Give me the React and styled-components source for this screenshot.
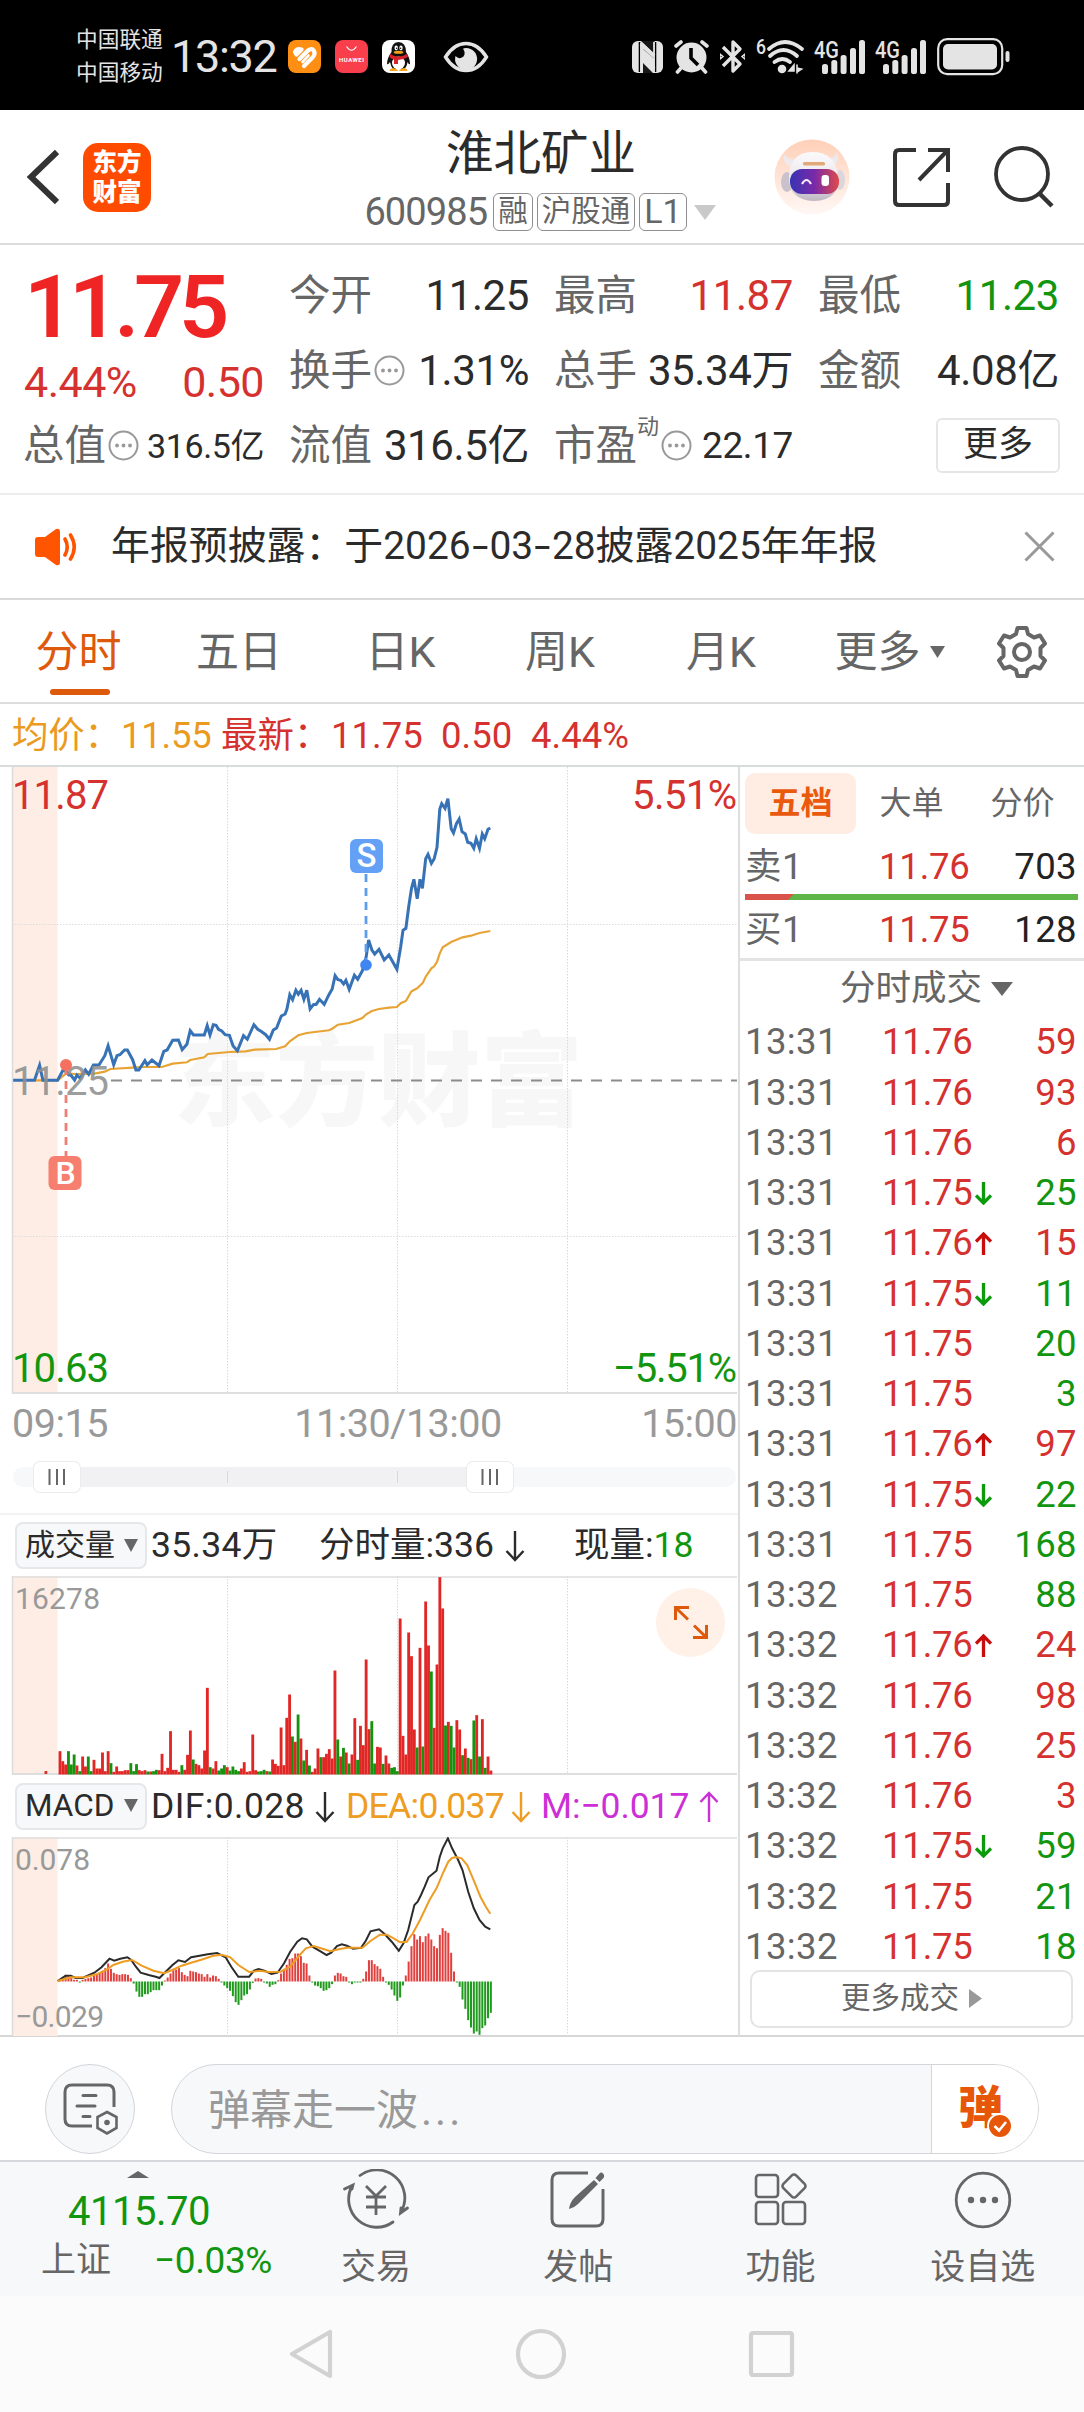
import React from 'react'
import styled, { createGlobalStyle, css } from 'styled-components'

const RED = '#d5312f'
const GREEN = '#12950f'
const ORANGE = '#dd5a0d'
const GREY = '#666'
const FONT = `Roboto, 'Noto Sans CJK SC', sans-serif`

const GlobalStyle = createGlobalStyle`
  * { box-sizing: border-box; }
  body { margin: 0; background: #fff; }
`

const Screen = styled.div`
  width: 1084px;
  height: 2412px;
  overflow: hidden;
  background: #fff;
  color: #2b2b2b;
  font-family: ${FONT};
  line-height: 1;
  white-space: nowrap;
`

/* ---------- status bar ---------- */

const StatusBar = styled.header`
  display: flex;
  align-items: center;
  height: 110px;
  padding: 3px 74px 0 76px;
  background: #000;
  color: #e4e4e4;
`

const Carriers = styled.div`
  width: 95px;
  padding-bottom: 1px;
  font-size: 21.7px;
  line-height: 33px;
`

const Clock = styled.div`
  width: 117px;
  font-size: 45px;
  letter-spacing: -1.3px;
`

const AppIcons = styled.div`
  display: flex;
  gap: 14px;
  margin-right: 28px;
`

const StatusIcons = styled.div`
  display: flex;
  align-items: center;
  gap: 11px;
  margin-left: auto;
`

/* ---------- title bar ---------- */

const TitleBar = styled.div`
  display: grid;
  grid-template-columns: 1fr auto 1fr;
  height: 135px;
  padding: 1px 30px 0 26px;
  border-bottom: 2px solid #dcdcdc;
`

const TitleLeft = styled.div`
  display: flex;
  align-items: center;
  gap: 24px;
`

const BrandLogo = styled.div`
  width: 68px;
  height: 69px;
  padding-top: 5px;
  border-radius: 15px;
  background: #ff4b00;
  color: #fff;
  font-size: 24.5px;
  font-weight: 800;
  line-height: 30px;
  text-align: center;
`

const TitleCenter = styled.div`
  display: flex;
  flex-direction: column;
  align-items: center;
  padding-top: 15px;
`

const StockName = styled.h1`
  margin: 0;
  padding-left: 2px;
  font-size: 47.5px;
  font-weight: 400;
  line-height: 57px;
`

const StockMeta = styled.div`
  display: flex;
  align-items: center;
  gap: 4px;
  height: 58px;
  color: ${GREY};
`

const StockCode = styled.span`
  margin-right: 2px;
  font-size: 38px;
  letter-spacing: -0.9px;
`

const Tag = styled.span`
  height: 38px;
  padding: 0 4px;
  border: 1.5px solid #8e8e8e;
  border-radius: 6px;
  font-size: 29.5px;
  line-height: 34px;
  ${p => p.$latin && css`
    margin-right: 3px;
    font-size: 34px;
  `}
`

const TitleRight = styled.div`
  display: flex;
  align-items: center;
  justify-content: flex-end;
  gap: 43px;
`

/* ---------- quote ---------- */

const Quote = styled.section`
  display: grid;
  grid-template-columns: 240px 239px 238px 240px;
  grid-template-rows: 75px 75px 75px;
  column-gap: 26px;
  height: 250px;
  padding: 13px 0 0 24px;
  border-bottom: 2px solid #ececec;
`

const LastPrice = styled.div`
  grid-row: span 2;
  color: ${RED};
`

const BigPrice = styled.div`
  height: 98px;
  color: #ee2524;
  font-size: 88px;
  font-weight: 600;
  line-height: 98px;
  letter-spacing: -5.2px;
`

const Change = styled.div`
  display: flex;
  justify-content: space-between;
  font-size: 43px;
  line-height: 52px;
  letter-spacing: -0.5px;
`

const Cell = styled.div`
  display: flex;
  align-items: center;
  justify-content: space-between;
`

const Label = styled.span`
  display: flex;
  align-items: center;
  gap: 2px;
  margin-left: -1px;
  color: ${GREY};
  font-size: 41.5px;
`

const LabelSup = styled.sup`
  align-self: flex-start;
  margin: -9px 0 0 -2px;
  font-size: 22px;
  line-height: 1;
`

const Value = styled.span`
  color: ${p => p.$color || '#2b2b2b'};
  font-size: ${p => p.$size || 42}px;
  letter-spacing: -0.4px;
`

const MoreButton = styled.button`
  width: 124px;
  height: 55px;
  margin: 0 -1px 1px auto;
  padding: 0 0 1px;
  border: 2px solid #e6e6e6;
  border-radius: 6px;
  background: #fff;
  color: #2b2b2b;
  font: 35px/1 ${FONT};
`

/* ---------- notice ---------- */

const Notice = styled.section`
  display: flex;
  align-items: center;
  height: 105px;
  padding: 0 29px 0 34px;
  border-bottom: 2px solid #d9d9d9;
`

const NoticeText = styled.p`
  flex: 1;
  margin: 0 0 0 31px;
  font-size: 38.9px;
`

const Dash = styled.span`
  display: inline-block;
  padding: 0 4px;
  transform: scaleX(1.5);
`

/* ---------- period tabs ---------- */

const Tabs = styled.nav`
  display: grid;
  grid-template-columns: 157px 164px 159px 160px 162px 175px 89px;
  height: 104px;
  border-bottom: 2px solid #dcdcdc;
  color: ${GREY};
  font-size: 43px;
`

const Tab = styled.div`
  position: relative;
  display: flex;
  align-items: center;
  justify-content: center;
  gap: 9px;
  height: 104px;
  ${p => p.$active && css`
    color: ${ORANGE};
    &::after {
      content: '';
      position: absolute;
      left: 50px;
      bottom: 9px;
      width: 60px;
      height: 6px;
      border-radius: 3px;
      background: ${ORANGE};
    }
  `}
`

const AverageLine = styled.div`
  display: flex;
  align-items: center;
  height: 63px;
  padding: 3px 0 0 12px;
  border-bottom: 2px solid #d9dcdc;
  color: ${RED};
  font-size: 36.5px;
`

const Average = styled.span`
  width: 209px;
  color: #ea9a1e;
  letter-spacing: -0.2px;
`

const Latest = styled.span`
  width: ${p => p.$width}px;
`

/* ---------- body: charts + order book ---------- */

const Body = styled.main`
  display: grid;
  grid-template-columns: 740px 344px;
  height: 1270px;
  border-bottom: 2px solid #d6d6d6;
`

const Charts = styled.div`
  border-right: 2px solid #dedede;
`

const ChartSvg = styled.svg`
  display: block;
  font-family: ${FONT};
`

const RangeBar = styled.div`
  display: flex;
  align-items: center;
  height: 68px;
  padding: 0 0 6px 13px;
  border-bottom: 2px solid #f3f3f3;
`

const TimeAxis = styled.div`
  display: grid;
  grid-template-columns: 1fr auto 1fr;
  align-items: center;
  height: 46px;
  margin-top: 7px;
  padding: 0 1px 0 12px;
  color: #999;
  font-size: 39.5px;
  letter-spacing: -0.5px;
  > :last-child { text-align: right; }
`

const AxisMid = styled.span`
  padding-left: 47px;
`

const IndicatorBar = styled.div`
  display: flex;
  align-items: center;
  height: ${p => p.$height}px;
  padding-left: 15px;
`

const IndicatorPicker = styled.div`
  display: flex;
  align-items: center;
  justify-content: space-between;
  width: 132px;
  height: 47px;
  margin-right: 4px;
  padding: 0 7px 1px 8px;
  border: 2px solid #e6e7ea;
  border-radius: 8px;
  background: #f7f8fa;
  font-size: ${p => p.$size || 30}px;
`

const Metrics = styled.div`
  display: grid;
  grid-template-columns: ${p => p.$cols};
  padding-top: 1px;
  font-size: 35.5px;
`

const Metric = styled.span`
  display: flex;
  align-items: center;
  color: ${p => p.$color || '#2b2b2b'};
  letter-spacing: ${p => p.$spacing || 0}px;
  > svg { margin-left: ${p => p.$gap || 9}px; }
`

const Green = styled.span`
  color: ${GREEN};
`

const Book = styled.aside`
  display: flex;
  flex-direction: column;
  color: ${GREY};
`

const BookTabs = styled.div`
  display: grid;
  grid-template-columns: repeat(3, 111px);
  height: 67px;
  padding: 6px 0 0 5px;
`

const BookTab = styled.div`
  border-radius: 10px;
  font-size: 32px;
  line-height: 61px;
  text-align: center;
  ${p => p.$active && css`
    background: #ffede4;
    color: #ea5a0e;
    font-weight: 700;
  `}
`

const Row = styled.div`
  display: grid;
  grid-template-columns: ${p => (p.$book ? 134 : 137)}px 93px 1fr auto;
  align-items: center;
  height: ${p => p.$height || 50.25}px;
  padding: ${p => p.$top || 3}px 8px 0 5px;
  font-size: 36.5px;
  letter-spacing: 0.4px;
`

const Price = styled.span`
  color: ${RED};
  letter-spacing: -0.2px;
`

const Volume = styled.span`
  margin-right: -1px;
  color: ${p => p.$color || '#222'};
`

const BidAskBar = styled.div`
  height: 6px;
  margin: 0 6px 0 5px;
  background: linear-gradient(135deg, #d9534a 34px, #5fb548 35px);
`

const TradesTitle = styled.div`
  display: flex;
  align-items: center;
  justify-content: center;
  gap: 9px;
  height: 58px;
  padding: 1px 0 0 29px;
  border-top: 3px solid #e3e3e3;
  font-size: 35.5px;
`

const MoreTrades = styled.button`
  display: flex;
  align-items: center;
  justify-content: center;
  gap: 10px;
  width: 323px;
  height: 58px;
  margin: -1px 0 0 10px;
  padding: 0;
  border: 2px solid #e4e4e4;
  border-radius: 10px;
  background: #fff;
  color: ${GREY};
  font: 29.5px/1 ${FONT};
`

/* ---------- bottom ---------- */

const Barrage = styled.div`
  display: flex;
  align-items: flex-start;
  height: 125px;
  padding: 27px 45px 0;
  border-bottom: 2px solid #d5d8dc;
`

const RoundButton = styled.div`
  display: flex;
  align-items: center;
  justify-content: center;
  width: 90px;
  height: 90px;
  margin-right: 36px;
  padding: 2px 0 0 2px;
  border: 1.5px solid #d3d5d9;
  border-radius: 50%;
  background: #f7f8fa;
`

const Field = styled.div`
  display: flex;
  flex: 1;
  height: 90px;
  overflow: hidden;
  border: 1.5px solid #d3d5d9;
  border-radius: 45px;
  background: #f7f8fa;
`

const Placeholder = styled.div`
  flex: 1;
  padding-left: 36px;
  color: #999;
  font-size: 42px;
  line-height: 91px;
`

const Dots = styled.span`
  margin-left: 3px;
  letter-spacing: 3px;
`

const BarrageToggle = styled.div`
  position: relative;
  width: 107px;
  padding-left: 26px;
  border-left: 1.5px solid #d3d5d9;
  background: #fff;
  color: #e6570a;
  font-size: 45px;
  font-weight: 900;
  line-height: 88px;
`

const ToggleBadge = styled.svg`
  position: absolute;
  left: 55px;
  top: 48px;
`

const BottomBar = styled.nav`
  display: grid;
  grid-template-columns: 275px repeat(4, 202.25px);
  height: 134px;
  background: #f7f8fa;
  color: ${GREY};
`

const IndexBox = styled.div`
  padding-top: 9px;
  > svg { display: block; margin-left: 127px; }
`

const IndexPrice = styled.div`
  margin-top: 14px;
  padding-left: 68px;
  color: ${GREEN};
  font-size: 40px;
  letter-spacing: -0.5px;
`

const IndexChange = styled.div`
  display: flex;
  align-items: center;
  justify-content: space-between;
  margin-top: 10px;
  padding: 0 3px 0 41px;
  font-size: 35px;
`

const IndexPercent = styled(Green)`
  font-size: 37px;
  letter-spacing: -0.4px;
`

const BottomItem = styled.div`
  display: flex;
  flex-direction: column;
  align-items: center;
  padding-top: 7px;
  font-size: 35px;
  > svg { margin-bottom: 21px; }
`

const SystemNav = styled.footer`
  display: flex;
  align-items: center;
  justify-content: space-between;
  height: 116px;
  padding: 0 288px;
  background: #fbfbfb;
`

/* ---------- data ---------- */

const priceLine =
  '28,961 73,961 84,916 91,961 122,961 134,929 140,935 146,945 150,945 158,960 163,945 170,955 181,930 188,943 198,915 210,914 222,887 229,857 241,914 248,887 254,884 264,870 270,870 281,899 288,930 294,930 307,902 312,914 322,900 337,917 347,874 354,870 366,841 378,840 386,869 396,853 403,812 410,825 433,825 439,797 445,825 452,794 458,796 463,808 470,813 477,824 486,826 494,858 503,872 516,827 524,838 538,794 546,808 553,814 563,824 571,838 579,810 586,804 596,768 604,762 608,747 614,704 620,719 627,691 632,703 638,691 644,718 650,691 657,747 664,734 670,733 677,718 687,733 697,704 704,687 710,647 716,659 722,661 728,672 733,661 740,688 751,646 758,658 768,632 776,590 781,540 788,570 794,582 803,568 814,600 824,585 841,628 849,560 854,511 860,505 866,440 872,385 877,358 884,416 890,358 895,385 902,296 907,283 914,310 920,296 926,262 932,147 936,131 943,145 949,116 956,206 961,219 967,191 973,177 979,215 986,222 991,247 998,250 1004,265 1009,236 1016,265 1022,222 1027,236 1034,208 1039,204'

const averageLine =
  '73,961 95,961 122,961 140,940 160,942 200,941 222,935 234,927 281,923 300,921 343,921 366,911 396,907 403,900 433,892 440,882 486,876 520,874 540,869 585,867 604,859 614,844 632,826 650,819 697,811 704,806 716,794 740,789 768,774 776,763 788,753 803,747 824,743 841,741 849,730 860,723 872,694 884,685 896,668 902,650 914,625 920,619 926,605 932,580 938,562 956,546 980,532 998,527 1016,519 1039,513'

const difLine =
  '122,633 139,617 150,617 160,624 175,624 200,608 215,592 232,566 242,572 255,566 270,562 278,570 288,590 298,608 315,615 330,620 338,624 350,607 365,586 378,571 392,576 405,562 420,558 440,553 460,549 478,562 490,590 505,620 528,620 538,602 548,597 560,602 575,612 588,608 602,580 615,545 630,515 640,505 650,508 662,530 680,545 692,555 702,548 714,528 724,523 735,527 748,536 765,533 775,512 785,484 803,478 815,492 830,515 845,542 855,520 865,480 878,405 885,395 892,375 900,350 908,322 925,302 932,260 938,235 949,205 958,235 970,268 980,300 992,365 1004,415 1016,450 1028,470 1039,478'

const deaLine =
  '122,633 150,622 180,622 205,613 225,600 240,585 260,575 280,570 300,587 325,602 348,610 365,600 385,587 405,578 430,568 450,558 470,554 488,562 505,585 528,606 550,602 570,606 595,605 615,590 635,555 648,535 665,528 680,535 700,544 720,537 735,533 768,533 785,513 805,494 820,494 835,506 848,517 862,515 875,490 890,450 910,390 925,355 940,305 950,275 958,264 966,261 978,265 990,285 1002,325 1018,380 1030,412 1039,431'

// one bar per minute, negative means the price fell in that minute
const volumes = [
  70, 40, 30, -70, -30, -60, 27, -10, 54, 24, -54, -10, 44, 18, 18, 66, 10, 70, -34, 8,
  24, 10, 10, 13, 13, -34, -10, -31, 13, 10, 13, -9, 9, -10, -14, 13, 62, 10, 20, 130,
  14, 14, 8, -28, 14, 59, 132, -45, 32, 28, 18, 72, 260, -22, 18, 40, -12, -18, -28, 22,
  -12, -24, -14, -10, 18, 37, 8, 10, 120, 13, -9, -10, -14, 10, -9, 45, 32, 26, 141, 28,
  170, 240, -114, 98, -180, 108, -42, 74, -27, 8, 18, 78, -52, 52, 62, 76, 48, 312, -105, 54,
  -80, 66, -33, 60, 169, -44, 146, 88, 345, 136, -160, -33, 83, 81, -32, 57, 33, -20, -22, -10,
  468, 116, 60, 426, 355, 135, -81, 380, -84, 519, 387, -309, 140, 330, 592, 498, -147, 158, -146, -81,
  163, 135, -58, 78, -50, 46, -162, 178, -54, 166, -20, 54, 12,
]

const macd = [
  5, 12, 20, 15, 10, 5, 5, -3, 5, 8, 10, 12, 18, 22, 25, 32, 40, 54, 38, 26,
  22, 20, 22, 22, 20, 10, -6, -30, -46, -46, -38, -38, -32, -26, -26, -26, -12, 3, 12, 24,
  34, 36, 40, 28, 20, 16, 32, 30, 28, 24, 22, 14, 22, 12, 18, 16, 8, -3, -12, -20,
  -28, -44, -62, -70, -56, -42, -38, -24, -4, 9, 10, 8, -3, -6, -16, -10, -8, 4, 24, 38,
  50, 68, 70, 84, 84, 76, 56, 54, 18, 0, -12, -14, -20, -28, -26, -20, -8, 18, 26, 24,
  16, 14, -2, -8, -2, -3, 0, 8, 30, 64, 64, 52, 46, 38, 14, -3, -10, -24, -42, -58,
  -48, -12, 18, 60, 106, 142, 126, 136, 118, 136, 144, 126, 106, 100, 140, 160, 152, 146, 86, 30,
  -2, -16, -54, -82, -116, -138, -156, -150, -160, -140, -132, -110, -94,
]

const trades = [
  ['13:31', '11.76', '', 59, 1],
  ['13:31', '11.76', '', 93, 1],
  ['13:31', '11.76', '', 6, 1],
  ['13:31', '11.75', 'down', 25, 0],
  ['13:31', '11.76', 'up', 15, 1],
  ['13:31', '11.75', 'down', 11, 0],
  ['13:31', '11.75', '', 20, 0],
  ['13:31', '11.75', '', 3, 0],
  ['13:31', '11.76', 'up', 97, 1],
  ['13:31', '11.75', 'down', 22, 0],
  ['13:31', '11.75', '', 168, 0],
  ['13:32', '11.75', '', 88, 0],
  ['13:32', '11.76', 'up', 24, 1],
  ['13:32', '11.76', '', 98, 1],
  ['13:32', '11.76', '', 25, 1],
  ['13:32', '11.76', '', 3, 1],
  ['13:32', '11.75', 'down', 59, 0],
  ['13:32', '11.75', '', 21, 0],
  ['13:32', '11.75', '', 18, 0],
]

// series are stored on a finer grid than the pixels of the plot
const SX = 740 / 1568
const SY = 1 / 3
const toPoints = (line, dy) =>
  line
    .split(' ')
    .map(p => p.split(',').map(Number))
    .map(([x, y]) => `${(x * SX).toFixed(1)},${(y * SY + dy).toFixed(1)}`)
    .join(' ')
const barX = i => (127 + 6.007 * i) * SX

/* ---------- icons ---------- */

const Triangle = ({ w, h, color = GREY, dir = 'down' }) => (
  <svg width={w} height={h} viewBox={`0 0 ${w} ${h}`}>
    <path
      fill={color}
      d={{
        down: `M0 0H${w}L${w / 2} ${h}Z`,
        up: `M0 ${h}H${w}L${w / 2} 0Z`,
        right: `M0 0V${h}L${w} ${h / 2}Z`,
      }[dir]}
    />
  </svg>
)

const LongArrow = ({ up }) => (
  <svg width="20" height="32" viewBox="0 0 20 32" fill="none" stroke="currentColor" strokeWidth="2.4">
    <path d={up ? 'M10 31V2M1.500 11L10 2L18.500 11' : 'M10 1V30M1.500 21L10 30L18.500 21'} />
  </svg>
)

const TickArrow = ({ dir }) => (
  <svg width="17" height="23" viewBox="0 0 17 23" fill="none" stroke={dir === 'up' ? '#c80d0d' : '#0d9a0d'} strokeWidth="3.300">
    <path d={dir === 'up' ? 'M8.500 23V2M1 9.500L8.500 2L16 9.500' : 'M8.500 0V21M1 13.500L8.500 21L16 13.500'} />
  </svg>
)

const InfoDots = () => (
  <svg width="31" height="31" viewBox="0 0 31 31">
    <circle cx="15.500" cy="15.500" r="14" fill="none" stroke="#999" strokeWidth="2" />
    {[9, 15.5, 22].map(x => <circle key={x} cx={x} cy="15.500" r="1.900" fill="#999" />)}
  </svg>
)

const HeartApp = () => (
  <svg width="33" height="33" viewBox="0 0 33 33">
    <rect width="33" height="33" rx="8" fill="#ff8f14" />
    <g stroke="#fff" strokeWidth="4.200" strokeLinecap="round" strokeLinejoin="round" fill="none">
      <path d="M7 12Q9 8 13.500 9.500L8.500 14.500Z" fill="#fff" />
      <path d="M11.500 19L20 10.500Q24 7.500 26 11Q27.500 14 25 17L16 26" />
      <path d="M14.500 22L20.500 15.500" strokeWidth="2.600" />
    </g>
  </svg>
)

const HuaweiApp = () => (
  <svg width="33" height="33" viewBox="0 0 33 33">
    <rect width="33" height="33" rx="8" fill="#f93f4c" />
    <path d="M11.500 6.500Q16.500 14 21.500 6.500" fill="none" stroke="#fff" strokeWidth="1.100" />
    <text x="16.500" y="21.500" textAnchor="middle" textLength="25" fontSize="6" fontWeight="700" fontFamily={FONT} fill="#fff">HUAWEI</text>
  </svg>
)

const QQApp = () => (
  <svg width="33" height="33" viewBox="0 0 33 33">
    <rect width="33" height="33" rx="8" fill="#fff" />
    <path d="M16.500 2Q9 2.500 9.500 12Q5 18 5 24Q6 25 8 22Q9 27 11 29H22Q25 27 25.500 22Q27 25 28 24Q28 18 24 12Q24 2.500 16.500 2Z" fill="#111" />
    <ellipse cx="16.500" cy="23" rx="6.500" ry="6.500" fill="#fff" />
    <ellipse cx="14.200" cy="8" rx="1.700" ry="2.400" fill="#fff" />
    <ellipse cx="19" cy="8" rx="1.700" ry="2.400" fill="#fff" />
    <circle cx="14.600" cy="8.300" r="0.800" fill="#111" />
    <circle cx="18.600" cy="8.300" r="0.800" fill="#111" />
    <ellipse cx="16.500" cy="12.300" rx="4.800" ry="1.500" fill="#f5a31a" />
    <path d="M8 14Q16.500 19 25 14L26 17Q21 20 16 20V24H12V19.500Q8 18 7.500 17Z" fill="#d8232a" />
    <path d="M8 30Q11 27 15.500 30.500H8ZM17.500 30.500Q22 27 25 30V30.500Z" fill="#f5a31a" stroke="#f5a31a" />
  </svg>
)

const Eye = () => (
  <svg width="46" height="32" viewBox="0 0 46 32">
    <path d="M2.500 16Q11 2.500 23 2.500T43.500 16Q35 29.500 23 29.500T2.500 16Z" fill="none" stroke="#e4e4e4" strokeWidth="3.400" />
    <path d="M23 7A11 11 0 1 1 12.500 15Q16 19 20.500 15.500Q23 12 20 7.800Q21 7 23 7Z" fill="#e4e4e4" />
  </svg>
)

const Nfc = () => (
  <svg width="31" height="32" viewBox="0 0 31 32">
    <rect width="31" height="32" rx="6" fill="#e4e4e4" />
    <path d="M7.500 1V31M23.500 1V31" stroke="#000" strokeWidth="1.600" />
    <path d="M11 8L22.500 18V13L9 0H22.500V12ZM11 13V32H21L11 22Z" fill="#000" fillOpacity="0.900" />
    <path d="M9 2V31M22 1V31" stroke="#e4e4e4" strokeWidth="1.800" />
    <path d="M9 3L22 15M10 16L22 28" stroke="#e4e4e4" strokeWidth="4" />
  </svg>
)

const Alarm = () => (
  <svg width="35" height="34" viewBox="0 0 35 34">
    <circle cx="17.500" cy="17.500" r="15" fill="#e4e4e4" />
    <path d="M2 6L7 2M33 6L28 2M7 28L3.500 32M28 28L31.500 32" stroke="#e4e4e4" strokeWidth="3.600" strokeLinecap="round" />
    <path d="M17 8V18L24 25" fill="none" stroke="#000" strokeWidth="3.600" />
  </svg>
)

const Bluetooth = () => (
  <svg width="25" height="35" viewBox="0 0 25 35" fill="none" stroke="#e4e4e4" strokeWidth="3.400">
    <path d="M3 8L20 25L13 32V3L20 10L3 27" strokeLinejoin="round" />
    <path d="M0 15L3 17.500L0 20ZM25 15L22 17.500L25 20Z" strokeWidth="1.500" />
  </svg>
)

const Wifi = () => (
  <svg width="48" height="37" viewBox="0 0 48 37" fill="none" stroke="#e4e4e4" strokeWidth="3.800" strokeLinecap="round" overflow="visible">
    <path d="M13 11Q29 -3 46 11M14 18Q27.500 6 41 18M18.500 24Q26.500 18 34 24" />
    <circle cx="26" cy="31" r="4.300" fill="#e4e4e4" stroke="none" />
    <path d="M33 33H38V27ZM41 27V35M41 30L45.500 31L41 34" strokeWidth="1.600" fill="#e4e4e4" />
    <text x="0" y="16" fontSize="21" fontWeight="500" textLength="10" lengthAdjust="spacingAndGlyphs" fontFamily={FONT} fill="#e4e4e4" stroke="none">6</text>
  </svg>
)

const Signal = () => (
  <svg width="50" height="36" viewBox="0 0 50 36" overflow="visible">
    <text x="-1" y="18.500" fontSize="23" fontWeight="500" textLength="25" lengthAdjust="spacingAndGlyphs" fontFamily={FONT} fill="#e4e4e4">4G</text>
    {[[7, 25], [16.3, 21], [25.600, 16], [35, 9], [44, 1]].map(([x, y]) => (
      <rect key={x} x={x} y={y} width="6" height={35 - y} rx="2.600" fill="#e4e4e4" />
    ))}
  </svg>
)

const Battery = () => (
  <svg width="73" height="38" viewBox="0 0 73 38">
    <rect x="1.200" y="1.200" width="64" height="35" rx="9" fill="none" stroke="#e4e4e4" strokeWidth="2.200" />
    <rect x="6" y="6" width="54" height="25.500" rx="5" fill="#e4e4e4" />
    <rect x="68.500" y="13" width="4" height="11" rx="2" fill="#e4e4e4" />
  </svg>
)

const Back = () => (
  <svg width="33" height="56" viewBox="0 0 33 56">
    <path d="M31 3L5 28L31 53" fill="none" stroke="#333" strokeWidth="6" />
  </svg>
)

const Robot = () => (
  <svg width="76" height="76" viewBox="0 0 76 76">
    <defs>
      <linearGradient id="halo" x2="0" y2="1">
        <stop offset="0" stopColor="#ffd0b8" />
        <stop offset="1" stopColor="#fff8f5" />
      </linearGradient>
      <linearGradient id="visor">
        <stop offset="0" stopColor="#3733b4" />
        <stop offset="0.500" stopColor="#7a2aa8" />
        <stop offset="1" stopColor="#e04a4a" />
      </linearGradient>
      <linearGradient id="shell" x2="0" y2="1">
        <stop offset="0" stopColor="#fbfafb" />
        <stop offset="0.600" stopColor="#eae6eb" />
        <stop offset="1" stopColor="#bdb6c2" />
      </linearGradient>
    </defs>
    <circle cx="38" cy="38" r="37.500" fill="url(#halo)" />
    <path d="M10 15Q8 24 17 28L24 20Q14 22 10 15ZM63 13Q66 22 60 27L52 19Q60 21 63 13Z" fill="#eee9ec" />
    <ellipse cx="13" cy="43" rx="6" ry="10" fill="#c9c2cc" />
    <ellipse cx="66" cy="41" rx="5" ry="10" fill="#dcd5da" />
    <path d="M15 37Q17 13 38 13Q61 13 64 36Q67 61 40 62Q14 61 15 37Z" fill="url(#shell)" />
    <rect x="16" y="30" width="49" height="25" rx="12" fill="url(#visor)" />
    <rect x="29" y="23" width="22" height="3.500" rx="1.500" fill="#e3a878" />
    <path d="M28 45Q32.500 37 37 45" fill="none" stroke="#f4e8ff" strokeWidth="2.200" />
    <rect x="47.500" y="36" width="7.500" height="11" rx="3" fill="#fff" />
  </svg>
)

const Share = () => (
  <svg width="58" height="59" viewBox="0 0 58 59" fill="none" stroke="#333" strokeWidth="4">
    <path d="M23 2H6Q2 2 2 6V53Q2 57 6 57H51Q55 57 55 53V35M35 2H55V24M55 2L26 32" />
  </svg>
)

const Search = () => (
  <svg width="60" height="62" viewBox="0 0 60 62" fill="none" stroke="#333" strokeWidth="3.800">
    <circle cx="28" cy="28" r="26" />
    <path d="M45 47L58 60" strokeWidth="4.500" />
  </svg>
)

const Speaker = () => (
  <svg width="46" height="38" viewBox="0 0 46 38">
    <path d="M1 12Q1 9 4 9H11L22 1Q26 0 26 4V34Q26 38 22 37L11 29H4Q1 29 1 26Z" fill="#ff5500" />
    <path d="M31 11Q35.500 19 31 27M36.500 7Q44 19 36.500 31" fill="none" stroke="#ff5500" strokeWidth="3.600" strokeLinecap="round" />
  </svg>
)

const Close = () => (
  <svg width="31" height="31" viewBox="0 0 31 31" stroke="#999" strokeWidth="3">
    <path d="M1.500 1.500L29.500 29.500M29.500 1.500L1.500 29.500" />
  </svg>
)

const Gear = () => (
  <svg width="54" height="54" viewBox="0 0 54 54" fill="none" stroke="#666" strokeWidth="4">
    <path strokeLinejoin="round" d="M22.500 3H31.500L33 9L39 12.500L45 10.500L50 18.500L45.500 23V31L50 35.500L45 43.500L39 41.500L33 45L31.500 51H22.500L21 45L15 41.500L9 43.500L4 35.500L8.500 31V23L4 18.500L9 10.500L15 12.500L21 9Z" />
    <circle cx="27" cy="27" r="8" />
  </svg>
)

const BarrageSettings = () => (
  <svg width="56" height="54" viewBox="0 0 56 54" fill="none" stroke="#666" strokeWidth="3">
    <path d="M29 43H9Q2 43 2 36V9Q2 2 9 2H44Q51 2 51 9V24" />
    <path d="M20 12.500H33M14 23H32M20 33.500H27" strokeLinecap="round" />
    <path d="M44 29L53.500 34V45L44 50.500L34.500 45V34Z" strokeWidth="2.600" />
    <circle cx="44" cy="39.500" r="2.800" fill="#666" stroke="none" />
  </svg>
)

const TradeIcon = () => (
  <svg width="66" height="60" viewBox="0 0 66 60" fill="none" stroke="#666" strokeWidth="2.800" strokeLinecap="round">
    <path d="M17 6.500A28 28 0 0 1 58 43M64.500 39L57.500 44L58 39M50 53A28 28 0 0 1 9 17M1.500 20L10 16L9 20" />
    <path d="M23 17L33 27L43 17M23 28H43M23 38H43M33 27V46" strokeLinecap="butt" />
  </svg>
)

const PostIcon = () => (
  <svg width="56" height="60" viewBox="0 0 56 60">
    <path d="M38 4H9Q2 4 2 11V50Q2 57 9 57H46Q53 57 53 50V20" fill="none" stroke="#666" strokeWidth="3" />
    <path d="M19 40Q20 33 25 28L44 11L48 15L28 35Q24 39 19 40ZM45.500 9L49 5Q51 2.500 53 4.500T53.500 9L49.500 13Z" fill="#666" />
  </svg>
)

const GridIcon = () => (
  <svg width="54" height="60" viewBox="0 0 54 60" fill="none" stroke="#666" strokeWidth="2.600">
    <rect x="2" y="6" width="22" height="22" rx="3" />
    <rect x="2" y="33" width="22" height="22" rx="3" />
    <rect x="29" y="33" width="22" height="22" rx="3" />
    <rect x="31" y="8" width="18" height="18" rx="3" transform="rotate(45 40 17)" />
  </svg>
)

const MoreIcon = () => (
  <svg width="58" height="60" viewBox="0 0 58 60">
    <circle cx="29" cy="31" r="26.800" fill="none" stroke="#666" strokeWidth="2.800" />
    {[17, 29, 41].map(x => <circle key={x} cx={x} cy="31" r="3.200" fill="#666" />)}
  </svg>
)

/* ---------- charts ---------- */

const Frame = ({ height, bottom = true }) => (
  <g>
    <rect x="12" y="0" width="45.500" height={height} fill="#fdede5" />
    {[227, 397, 567].map(x => (
      <path key={x} d={`M${x}.500 0V${height}`} stroke="#d9d9d9" strokeDasharray="1.500 1.500" />
    ))}
    <path d={`M12.500 0V${height}`} stroke="#dcdcdc" strokeWidth="1.500" />
    {bottom && <path d={`M12 ${height - 1}H737`} stroke="#dedede" strokeWidth="2" />}
  </g>
)

const PriceChart = () => (
  <ChartSvg width="738" height="627" viewBox="0 0 738 627">
    <text x="173" y="351" fontSize="102" fontWeight="900" textLength="410" lengthAdjust="spacingAndGlyphs" fill="#f7f7f7">东方财富</text>
    <Frame height={627} />
    {[157.5, 469.5].map(y => (
      <path key={y} d={`M12 ${y}H737`} stroke="#dcdcdc" strokeDasharray="1.500 1.500" />
    ))}
    <path d="M111 313.500H737" stroke="#8c8c8c" strokeWidth="2" strokeDasharray="11 9" />
    <g fontSize="40">
      <text x="12" y="42" textLength="97" fill={RED}>11.87</text>
      <text x="632" y="42" textLength="105" fill={RED}>5.51%</text>
      <text x="12" y="615" textLength="97" fill={GREEN}>10.63</text>
      <text x="613" y="615" textLength="124" fill={GREEN}>−5.51%</text>
    </g>
    <polyline points={toPoints(averageLine, -7)} fill="none" stroke="#e8a335" strokeWidth="2.200" />
    <polyline points={toPoints(priceLine, -7)} fill="none" stroke="#3672b5" strokeWidth="3" />
    <text x="12" y="328" fontSize="40" textLength="97" fill="#8f8f8f" fillOpacity="0.900">11.25</text>
    <path d="M366 107V198" stroke="#5f9cec" strokeWidth="2.800" strokeDasharray="8 6" />
    <circle cx="366" cy="198" r="5.800" fill="#3f86f3" />
    <rect x="350" y="72" width="33" height="34" rx="6" fill="#64a1f6" />
    <text x="366.500" y="100" textAnchor="middle" fontSize="33" fontWeight="500" fill="#fff">S</text>
    <path d="M66 300V390" stroke="#ef7f72" strokeWidth="2.800" strokeDasharray="8 6" />
    <circle cx="66" cy="298" r="6" fill="#f5705f" />
    <rect x="48.500" y="389" width="33" height="34" rx="6" fill="#f77f6f" />
    <text x="65.500" y="417" textAnchor="middle" fontSize="32" fontWeight="500" fill="#fff">B</text>
  </ChartSvg>
)

const RangeSlider = () => (
  <ChartSvg width="725" height="44" viewBox="0 0 725 44">
    <rect x="0" y="12" width="723" height="20" rx="10" fill="#f7f8fa" />
    <rect x="44" y="12" width="433" height="20" fill="#f1f1f3" />
    <path d="M214.500 16V28M384.500 16V28" stroke="#d8d8d8" />
    {[21, 454].map(x => (
      <g key={x}>
        <rect x={x - 1} y="6" width="48" height="32" rx="7" fill="#e9ebed" />
        <rect x={x} y="7" width="46" height="30" rx="6" fill="#fff" />
        <path d={`M${x + 15.5} 14V30M${x + 23} 14V30M${x + 30} 14V30`} stroke="#666" strokeWidth="2" />
      </g>
    ))}
  </ChartSvg>
)

const VolumeChart = () => (
  <ChartSvg width="738" height="199" viewBox="0 0 738 199">
    <Frame height={199} />
    <path d="M12 1H737" stroke="#dedede" strokeWidth="1.500" />
    <rect x="44.500" y="195" width="2.800" height="3" fill={RED} />
    {volumes.map((v, i) => (
      <rect
        key={i}
        x={barX(i) - 1.4}
        y={198.5 - Math.abs(v) * SY}
        width="2.850"
        height={Math.abs(v) * SY}
        fill={v > 0 ? '#e02725' : '#16920f'}
      />
    ))}
    <text x="15" y="33" fontSize="30" textLength="85" fill="#999">16278</text>
    <circle cx="690.500" cy="46.500" r="34.500" fill="#fff0e8" />
    <path d="M675.500 44V31.500H689M676 32L688 43.500M706.500 49V61.500H693M706 61L694 49.500" fill="none" stroke="#dd5a0d" strokeWidth="3" />
  </ChartSvg>
)

const MacdChart = () => (
  <ChartSvg width="738" height="199" viewBox="0 0 738 199">
    <Frame height={199} bottom={false} />
    <path d="M12 1H737" stroke="#dedede" strokeWidth="1.500" />
    {macd.map((v, i) => (
      <rect
        key={i}
        x={barX(i) - 1}
        y={v > 0 ? 144.5 - v * SY : 144.5}
        width="2"
        height={Math.max(Math.abs(v) * SY, 1)}
        fill={v > 0 ? '#e0403e' : '#1f9a1c'}
      />
    ))}
    <polyline points={toPoints(difLine, -67)} fill="none" stroke="#2b2b2b" strokeWidth="2" />
    <polyline points={toPoints(deaLine, -67)} fill="none" stroke="#ee9c22" strokeWidth="2" />
    <text x="15" y="33" fontSize="30" textLength="75" fill="#999">0.078</text>
    <text x="15" y="190" fontSize="30" textLength="89" fill="#999">−0.029</text>
  </ChartSvg>
)

function App() {
  return (
    <Screen>
      <GlobalStyle />
      <StatusBar>
        <Carriers>
          <div>中国联通</div>
          <div>中国移动</div>
        </Carriers>
        <Clock>13:32</Clock>
        <AppIcons>
          <HeartApp />
          <HuaweiApp />
          <QQApp />
        </AppIcons>
        <Eye />
        <StatusIcons>
          <Nfc />
          <Alarm />
          <Bluetooth />
          <Wifi />
          <Signal />
          <Signal />
          <Battery />
        </StatusIcons>
      </StatusBar>

      <TitleBar>
        <TitleLeft>
          <Back />
          <BrandLogo>
            <div>东方</div>
            <div>财富</div>
          </BrandLogo>
        </TitleLeft>
        <TitleCenter>
          <StockName>淮北矿业</StockName>
          <StockMeta>
            <StockCode>600985</StockCode>
            <Tag>融</Tag>
            <Tag>沪股通</Tag>
            <Tag $latin>L1</Tag>
            <Triangle w={22} h={15} color="#c9c9c9" />
          </StockMeta>
        </TitleCenter>
        <TitleRight>
          <Robot />
          <Share />
          <Search />
        </TitleRight>
      </TitleBar>

      <Quote>
        <LastPrice>
          <BigPrice>11.75</BigPrice>
          <Change>
            <span>4.44%</span>
            <span>0.50</span>
          </Change>
        </LastPrice>
        <Cell><Label>今开</Label><Value>11.25</Value></Cell>
        <Cell><Label>最高</Label><Value $color={RED}>11.87</Value></Cell>
        <Cell><Label>最低</Label><Value $color={GREEN}>11.23</Value></Cell>
        <Cell><Label>换手<InfoDots /></Label><Value>1.31%</Value></Cell>
        <Cell><Label>总手</Label><Value>35.34万</Value></Cell>
        <Cell><Label>金额</Label><Value>4.08亿</Value></Cell>
        <Cell><Label>总值<InfoDots /></Label><Value $size={34}>316.5亿</Value></Cell>
        <Cell><Label>流值</Label><Value>316.5亿</Value></Cell>
        <Cell><Label>市盈<LabelSup>动</LabelSup><InfoDots /></Label><Value $size={37}>22.17</Value></Cell>
        <Cell><MoreButton>更多</MoreButton></Cell>
      </Quote>

      <Notice>
        <Speaker />
        <NoticeText>
          年报预披露：于2026<Dash>-</Dash>03<Dash>-</Dash>28披露2025年年报
        </NoticeText>
        <Close />
      </Notice>

      <Tabs>
        <Tab $active>分时</Tab>
        <Tab>五日</Tab>
        <Tab>日K</Tab>
        <Tab>周K</Tab>
        <Tab>月K</Tab>
        <Tab>更多<Triangle w={15} h={12} /></Tab>
        <Tab><Gear /></Tab>
      </Tabs>

      <AverageLine>
        <Average>均价：11.55</Average>
        <Latest $width={110}>最新：</Latest>
        <Latest $width={110}>11.75</Latest>
        <Latest $width={90}>0.50</Latest>
        <Latest $width={100}>4.44%</Latest>
      </AverageLine>

      <Body>
        <Charts>
          <PriceChart />
          <TimeAxis>
            <span>09:15</span>
            <AxisMid>11:30/13:00</AxisMid>
            <span>15:00</span>
          </TimeAxis>
          <RangeBar><RangeSlider /></RangeBar>
          <IndicatorBar $height={61}>
            <IndicatorPicker>成交量<Triangle w={14} h={13} /></IndicatorPicker>
            <Metrics $cols="168px 255px auto">
              <Metric $spacing={0.3}>35.34万</Metric>
              <Metric $gap={11}>分时量:336<LongArrow /></Metric>
              <Metric>现量:<Green>18</Green></Metric>
            </Metrics>
          </IndicatorBar>
          <VolumeChart />
          <IndicatorBar $height={62}>
            <IndicatorPicker $size={31.5}>MACD<Triangle w={14} h={13} /></IndicatorPicker>
            <Metrics $cols="195px 195px auto">
              <Metric $spacing={0.4} $gap={10}>DIF:0.028<LongArrow /></Metric>
              <Metric $color="#ee9c22" $spacing={-0.7} $gap={7}>DEA:0.037<LongArrow /></Metric>
              <Metric $color="#cc2fd6" $spacing={-0.1} $gap={10}>M:−0.017<LongArrow up /></Metric>
            </Metrics>
          </IndicatorBar>
          <MacdChart />
        </Charts>

        <Book>
          <BookTabs>
            <BookTab $active>五档</BookTab>
            <BookTab>大单</BookTab>
            <BookTab>分价</BookTab>
          </BookTabs>
          <Row $book $height={60} $top={6}>
            <span>卖1</span>
            <Price>11.76</Price>
            <span />
            <Volume>703</Volume>
          </Row>
          <BidAskBar />
          <Row $book $height={58} $top={2}>
            <span>买1</span>
            <Price>11.75</Price>
            <span />
            <Volume>128</Volume>
          </Row>
          <TradesTitle>
            分时成交
            <Triangle w={22} h={14} />
          </TradesTitle>
          {trades.map(([time, price, dir, volume, buy], i) => (
            <Row key={i}>
              <span>{time}</span>
              <Price>{price}</Price>
              <span>{dir && <TickArrow dir={dir} />}</span>
              <Volume $color={buy ? RED : GREEN}>{volume}</Volume>
            </Row>
          ))}
          <MoreTrades>
            更多成交
            <Triangle w={13} h={19} color="#999" dir="right" />
          </MoreTrades>
        </Book>
      </Body>

      <Barrage>
        <RoundButton><BarrageSettings /></RoundButton>
        <Field>
          <Placeholder>弹幕走一波<Dots>...</Dots></Placeholder>
          <BarrageToggle>
            弹
            <ToggleBadge width="26" height="26" viewBox="0 0 26 26">
              <circle cx="13" cy="13" r="12" fill="#e6570a" stroke="#fff" strokeWidth="2" />
              <path d="M7.500 13L12 17.500L19 9" fill="none" stroke="#fff" strokeWidth="2.600" />
            </ToggleBadge>
          </BarrageToggle>
        </Field>
      </Barrage>

      <BottomBar>
        <IndexBox>
          <Triangle w={22} h={7} dir="up" />
          <IndexPrice>4115.70</IndexPrice>
          <IndexChange>
            <span>上证</span>
            <IndexPercent>−0.03%</IndexPercent>
          </IndexChange>
        </IndexBox>
        <BottomItem><TradeIcon />交易</BottomItem>
        <BottomItem><PostIcon />发帖</BottomItem>
        <BottomItem><GridIcon />功能</BottomItem>
        <BottomItem><MoreIcon />设自选</BottomItem>
      </BottomBar>

      <SystemNav>
        <svg width="46" height="52" viewBox="0 0 46 52">
          <path d="M42 4V48L4 26Z" fill="none" stroke="#d2d2d2" strokeWidth="4.200" strokeLinejoin="round" />
        </svg>
        <svg width="52" height="52" viewBox="0 0 52 52">
          <circle cx="26" cy="26" r="23" fill="none" stroke="#d2d2d2" strokeWidth="4.200" />
        </svg>
        <svg width="48" height="48" viewBox="0 0 48 48">
          <rect x="3" y="3" width="41" height="42" rx="2" fill="none" stroke="#d2d2d2" strokeWidth="4.200" />
        </svg>
      </SystemNav>
    </Screen>
  )
}

export default App
